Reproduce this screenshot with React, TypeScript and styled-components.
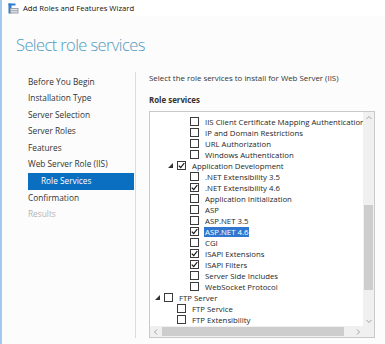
import styled, { createGlobalStyle } from "styled-components";

// page reset and base font
const GlobalStyle = createGlobalStyle`
  html, body {
    margin: 0;
    padding: 0;
    background: #fcfcfc;
  }
  body {
    font-family: "Open Sans", "Noto Sans", "Liberation Sans", sans-serif;
    color: #262626;
  }
`;

// the whole wizard window, with its blue edge on the left
const Window = styled.div`
  position: relative;
  width: 385px;
  height: 344px;
  display: flex;
  border-left: 2px solid #a3c9ee;
  box-sizing: border-box;
  overflow: hidden;
`;

// red marker lying over the window edge
const EdgeMark = styled.div`
  position: absolute;
  left: -2px;
  top: 258px;
  width: 1px;
  height: 33px;
  background: #d3141c;
`;

const Main = styled.div`
  flex: 1;
  display: flex;
  flex-direction: column;
`;

const TitleBar = styled.div`
  flex: none;
  height: 16px;
  background: #ffffff;
  display: flex;
  align-items: center;
  padding-left: 6px;
  gap: 4px;
  font-size: 7.7px;
  color: #111;
`;

const Header = styled.div`
  flex: none;
  height: 56px;
  display: flex;
  align-items: center;
  padding-left: 14px;
  padding-top: 2px;
  box-sizing: border-box;
`;

const PageTitle = styled.div`
  font-size: 16.5px;
  line-height: 20px;
  font-weight: 300;
  color: #519aC0;
  letter-spacing: -0.6px;
  white-space: nowrap;
`;

const Body = styled.div`
  flex: 1;
  display: grid;
  grid-template-columns: 134px 1fr;
  padding-bottom: 6px;
`;

// left step list
const Nav = styled.div`
  border-right: 1px solid #dcdcdc;
  padding-top: 1.5px;
  display: flex;
  flex-direction: column;
`;

const NavItem = styled.div<{ $active?: boolean; $disabled?: boolean; $sub?: boolean }>`
  height: 16.6px;
  line-height: 16.6px;
  margin-left: 26px;
  margin-right: 1px;
  padding-left: ${(p) => (p.$sub ? "13px" : "0")};
  font-size: 8.3px;
  white-space: nowrap;
  background: ${(p) => (p.$active ? "#0a6fc0" : "transparent")};
  color: ${(p) => (p.$active ? "#ffffff" : p.$disabled ? "#b4b4b4" : "#333333")};
`;

// right column
const Content = styled.div`
  padding-left: 13px;
  display: flex;
  flex-direction: column;
`;

const Intro = styled.div`
  height: 12px;
  line-height: 12px;
  font-size: 7.9px;
  color: #333;
`;

const SectionLabel = styled.div`
  margin-top: 10px;
  height: 12px;
  line-height: 12px;
  font-size: 7.9px;
  font-weight: 700;
  color: #333;
`;

const ListBox = styled.div`
  margin-top: 5px;
  width: 226px;
  height: 227px;
  border: 1px solid #c9c9c9;
  box-sizing: border-box;
  background: #ffffff;
  display: grid;
  grid-template-columns: 1fr 11px;
  grid-template-rows: 1fr 11px;
  overflow: hidden;
`;

const Rows = styled.div`
  padding-top: 4px;
  overflow: hidden;
`;

const Row = styled.div<{ $level: number }>`
  height: 11px;
  display: flex;
  align-items: center;
  padding-left: ${(p) => 14 + (p.$level - 1) * 13}px;
  position: relative;
  white-space: nowrap;
  font-size: 7.8px;
  color: #262626;
`;

const Expander = styled.svg`
  position: absolute;
  margin-left: -9px;
  width: 5px;
  height: 5px;
`;

const Box = styled.span`
  flex: none;
  width: 9px;
  height: 9px;
  box-sizing: border-box;
  border: 1px solid #3b3b3b;
  background: #fff;
  margin-right: 5px;
  display: flex;
  align-items: center;
  justify-content: center;
`;

const Label = styled.span<{ $selected?: boolean }>`
  padding: 0 1px;
  line-height: 10px;
  background: ${(p) => (p.$selected ? "#3078cf" : "transparent")};
  color: ${(p) => (p.$selected ? "#ffffff" : "inherit")};
`;

// scroll bars
const VScroll = styled.div`
  background: #f0f0f0;
  display: flex;
  flex-direction: column;
  align-items: stretch;
`;

const HScroll = styled.div`
  background: #f0f0f0;
  display: flex;
  align-items: stretch;
`;

const Arrow = styled.div`
  flex: none;
  width: 11px;
  height: 11px;
  display: flex;
  align-items: center;
  justify-content: center;
`;

const Track = styled.div<{ $vertical?: boolean }>`
  flex: 1;
  display: flex;
  flex-direction: ${(p) => (p.$vertical ? "column" : "row")};
`;

const Thumb = styled.div<{ $start: number; $size: number; $vertical?: boolean }>`
  background: #cdcdcd;
  ${(p) =>
    p.$vertical
      ? `margin-top: ${p.$start}px; height: ${p.$size}px; margin-left: 1px; margin-right: 1px;`
      : `margin-left: ${p.$start}px; width: ${p.$size}px; margin-top: 1px; margin-bottom: 1px;`}
`;

const Corner = styled.div`
  background: #f0f0f0;
`;

const ServerIcon = () => (
  <svg width="11" height="11" viewBox="0 0 11 11">
    <rect x="0.5" y="0.5" width="3" height="10" fill="#2f7fcc" />
    <rect x="0.5" y="0.5" width="7" height="2" fill="#2f7fcc" />
    <rect x="2" y="5" width="8.5" height="5.5" fill="#9aa3ad" />
    <rect x="3" y="6" width="6.5" height="1.2" fill="#e6e9ec" />
    <rect x="3" y="8.2" width="6.5" height="1.2" fill="#e6e9ec" />
  </svg>
);

const Check = () => (
  <svg width="7" height="7" viewBox="0 0 7 7">
    <path d="M0.8 3.6 L2.7 5.6 L6.3 1" stroke="#111" strokeWidth="1.2" fill="none" />
  </svg>
);

const Chevron = ({ dir }: { dir: "up" | "down" | "left" | "right" }) => {
  const d = {
    up: "M1.5 5 L4 2.5 L6.5 5",
    down: "M1.5 3 L4 5.5 L6.5 3",
    left: "M5 1.5 L2.5 4 L5 6.5",
    right: "M3 1.5 L5.5 4 L3 6.5",
  }[dir];
  return (
    <svg width="8" height="8" viewBox="0 0 8 8">
      <path d={d} stroke="#9a9a9a" strokeWidth="0.9" fill="none" />
    </svg>
  );
};

type Service = {
  name: string;
  level: number;
  checked?: boolean;
  expanded?: boolean;
  selected?: boolean;
};

const services: Service[] = [
  { name: "IIS Client Certificate Mapping Authentication", level: 3 },
  { name: "IP and Domain Restrictions", level: 3 },
  { name: "URL Authorization", level: 3 },
  { name: "Windows Authentication", level: 3 },
  { name: "Application Development", level: 2, checked: true, expanded: true },
  { name: ".NET Extensibility 3.5", level: 3 },
  { name: ".NET Extensibility 4.6", level: 3, checked: true },
  { name: "Application Initialization", level: 3 },
  { name: "ASP", level: 3 },
  { name: "ASP.NET 3.5", level: 3 },
  { name: "ASP.NET 4.6", level: 3, checked: true, selected: true },
  { name: "CGI", level: 3 },
  { name: "ISAPI Extensions", level: 3, checked: true },
  { name: "ISAPI Filters", level: 3, checked: true },
  { name: "Server Side Includes", level: 3 },
  { name: "WebSocket Protocol", level: 3 },
  { name: "FTP Server", level: 1, expanded: true },
  { name: "FTP Service", level: 2 },
  { name: "FTP Extensibility", level: 2 },
];

const steps = [
  "Before You Begin",
  "Installation Type",
  "Server Selection",
  "Server Roles",
  "Features",
  "Web Server Role (IIS)",
];

const App = () => {
  return (
    <>
      <GlobalStyle />
      <Window>
        <EdgeMark />
        <Main>
          <TitleBar>
            <ServerIcon />
            <span>Add Roles and Features Wizard</span>
          </TitleBar>
          <Header>
            <PageTitle>Select role services</PageTitle>
          </Header>
          <Body>
            <Nav>
              {steps.map((s) => (
                <NavItem key={s}>{s}</NavItem>
              ))}
              <NavItem $active $sub>
                Role Services
              </NavItem>
              <NavItem>Confirmation</NavItem>
              <NavItem $disabled>Results</NavItem>
            </Nav>
            <Content>
              <Intro>Select the role services to install for Web Server (IIS)</Intro>
              <SectionLabel>Role services</SectionLabel>
              <ListBox>
                <Rows>
                  {services.map((s) => (
                    <Row key={s.name} $level={s.level}>
                      {s.expanded && (
                        <Expander viewBox="0 0 5 5">
                          <polygon points="5,0 5,5 0,5" fill="#333" />
                        </Expander>
                      )}
                      <Box>{s.checked && <Check />}</Box>
                      <Label $selected={s.selected}>{s.name}</Label>
                    </Row>
                  ))}
                </Rows>
                <VScroll>
                  <Arrow>
                    <Chevron dir="up" />
                  </Arrow>
                  <Track $vertical>
                    <Thumb $vertical $start={82} $size={85} />
                  </Track>
                  <Arrow>
                    <Chevron dir="down" />
                  </Arrow>
                </VScroll>
                <HScroll>
                  <Arrow>
                    <Chevron dir="left" />
                  </Arrow>
                  <Track>
                    <Thumb $start={1} $size={182} />
                  </Track>
                  <Arrow>
                    <Chevron dir="right" />
                  </Arrow>
                </HScroll>
                <Corner />
              </ListBox>
            </Content>
          </Body>
        </Main>
      </Window>
    </>
  );
};

export default App;
